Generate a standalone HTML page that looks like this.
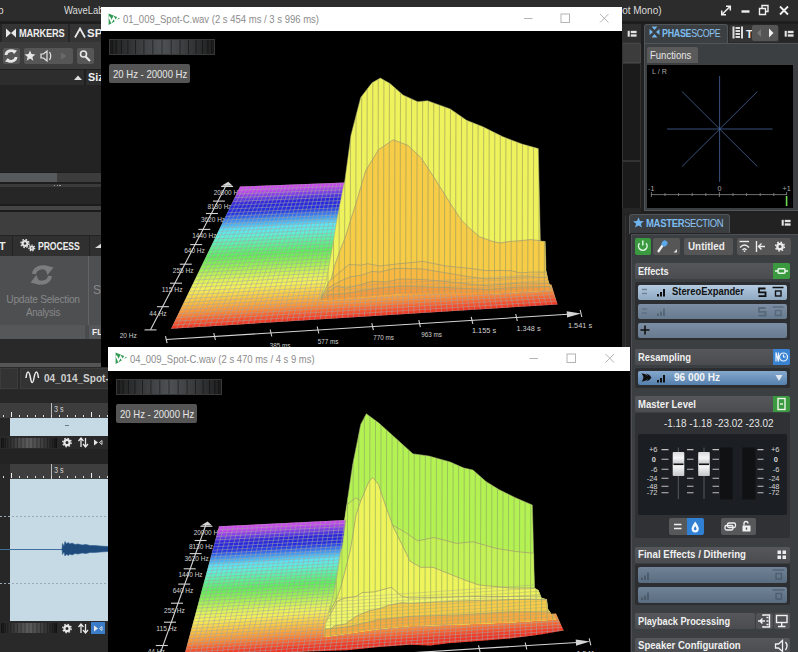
<!DOCTYPE html>
<html><head><meta charset="utf-8"><title>WaveLab</title>
<style>
html,body{margin:0;padding:0;background:#2b2b2b;}
#root{position:relative;width:798px;height:652px;overflow:hidden;background:#2a2a2a;font-family:"Liberation Sans",sans-serif;font-size:12px;color:#e4e4e4;}
#root div,#root span,#root svg{position:absolute;box-sizing:border-box;}
.t{white-space:nowrap;line-height:1;}
.b{font-weight:bold;}
.btn{background:#565656;border-radius:2px;}
.hdr{background:linear-gradient(#55575a,#4a4c4f);border-radius:2px;height:16px;left:635px;width:155px;}
.hdr .t{left:3.400px;top:2.600px;font-weight:bold;font-size:11px;color:#f0f0f0;}
.slot{left:638px;width:149px;height:15px;border-radius:2px;}
.win{overflow:hidden;background:#000;}
.wtitle{left:0;top:0;right:0;height:24px;background:#fff;}
.wtitle .t{color:#8c8c8c;font-size:10.500px;top:7px;}
.rng{height:19px;width:81px;background:#555;border-radius:2px;}
.rng .t{left:3.600px;top:4.500px;font-size:10.500px;color:#e6e6e6;}

#tx1{transform:scaleX(0.9465);transform-origin:0 0;}
#tx2{transform:scaleX(0.9961);transform-origin:0 0;}
#tx3{transform:scaleX(0.8035);transform-origin:0 0;}
#tx4{transform:scaleX(0.8002);transform-origin:0 0;}
#tx5{transform:scaleX(0.9479) translateX(-50%);transform-origin:0 0;}
#tx6{transform:scaleX(0.8992) translateX(-50%);transform-origin:0 0;}
#tx7{transform:scaleX(0.9300);transform-origin:0 0;}
#tx8{transform:scaleX(0.8224);transform-origin:0 0;}
#tx9{transform:scaleX(0.9071);transform-origin:0 0;}
#tx10{transform:scaleX(0.8786);transform-origin:0 0;}
#tx11{transform:scaleX(0.9132);transform-origin:0 0;}
#tx12{transform:scaleX(0.8341);transform-origin:0 0;}
#tx13{transform:scaleX(0.8533);transform-origin:0 0;}
#tx14{transform:scaleX(0.8499);transform-origin:0 0;}
#tx15{transform:scaleX(0.9346);transform-origin:0 0;}
#tx16{transform:scaleX(0.8701);transform-origin:0 0;}
#tx17{transform:scaleX(0.9434);transform-origin:0 0;}
#tx18{transform:scaleX(0.8791);transform-origin:0 0;}
#tx19{transform:scaleX(0.8359);transform-origin:0 0;}
#tx20{transform:scaleX(0.8706);transform-origin:0 0;}
#tx21{transform:scaleX(0.9052);transform-origin:0 0;}
#tx22{transform:scaleX(0.9092);transform-origin:0 0;}
#tx23{transform:scaleX(0.9012);transform-origin:0 0;}
#tx24{transform:scaleX(0.9092);transform-origin:0 0;}
</style></head>
<body>
<div id="root">
<!-- title bar -->
<div style="left:0;top:0;width:798px;height:21px;background:#2c2c2c;"></div>
<div class="t" style="left:-2px;top:5.700px;font-size:10px;color:#dcdcdc;">p</div>
<div style="left:0;top:0;width:100.500px;height:21px;overflow:hidden;"><div id="tx1" class="t" style="left:64px;top:5.700px;font-size:10px;color:#dcdcdc;">WaveLab Pro</div></div>
<div style="left:622px;top:0;width:100px;height:21px;overflow:hidden;"><div id="tx2" class="t" style="left:-12.500px;top:5.700px;font-size:10px;color:#dcdcdc;">Spot Mono)</div></div>
<svg style="left:715px;top:0" width="83" height="21" viewBox="715 0 83 21" fill="none" stroke="#f0f0f0" stroke-width="1.6">
 <path d="M722 14.5 L730 6.5 M726 6.2 h4.3 v4.3 M721.7 10.5 v4.3 h4.3" stroke-width="1.5"/>
 <path d="M741.5 11.5 h8" stroke-width="2.4"/>
 <path d="M759.5 8.5 h6 v6 h-6 z M762 8 v-2.5 h6 v6 h-2.5" stroke-width="1.4"/>
 <path d="M780 6.5 l8 8 M788 6.5 l-8 8" stroke-width="1.8"/>
</svg>
<div style="left:0;top:21px;width:798px;height:3px;background:#1e1e1e;"></div>

<!-- LEFT TOP PANEL -->
<div style="left:0;top:24px;width:641px;height:18px;background:#262626;"></div>
<div style="left:2px;top:24px;width:66px;height:18px;background:#343434;"></div>
<div style="left:70px;top:24px;width:60px;height:18px;background:#343434;"></div>
<svg style="left:5px;top:27px" width="12" height="12" viewBox="0 0 12 12"><path d="M1 1.5 L6 6 L1 10.5 Z M11 1.5 L6 6 L11 10.5 Z" fill="#e8e8e8"/></svg>
<div id="tx3" class="t b" style="left:19px;top:28px;font-size:11.5px;color:#ececec;letter-spacing:-0.2px;">MARKERS</div>
<svg style="left:74px;top:27px" width="12" height="12" viewBox="0 0 12 12"><path d="M1 10.5 L6 1.5 L11 10.5" fill="none" stroke="#e8e8e8" stroke-width="1.8"/></svg>
<div class="t b" style="left:87px;top:28px;font-size:11.5px;color:#ececec;">SPE</div>
<!-- toolbar -->
<div style="left:0;top:42px;width:641px;height:27px;background:#3c3c3c;"></div>
<div class="btn" style="left:2.5px;top:48px;width:17px;height:16px;"></div>
<div class="btn" style="left:23.5px;top:48px;width:49px;height:16px;"></div>
<div class="btn" style="left:77px;top:48px;width:17px;height:16px;"></div>
<svg style="left:0;top:42px" width="101" height="27" viewBox="0 42 101 27">
 <g fill="none" stroke="#e6e6e6" stroke-width="2.800"><path d="M6 55 a5 4.5 0 0 1 9 -2.5"/><path d="M16 57 a5 4.5 0 0 1 -9 2.5"/></g>
 <path d="M12.5 49.5 l4.5 1 l-3 3.5z M9.500 62.500 l-4.500 -1 l3 -3.500z" fill="#e6e6e6"/>
 <path d="M30 50.500 l1.500 3.600 3.900 0.300 -3 2.500 1 3.800 -3.400 -2.100 -3.400 2.100 1 -3.800 -3 -2.500 3.900 -0.300z" fill="#e6e6e6"/>
 <path d="M41 54 h2.500 l3.500 -3 v10 l-3.500 -3 h-2.500z" fill="none" stroke="#e6e6e6" stroke-width="1.200"/>
 <path d="M49.500 52 q2.500 4 0 8" fill="none" stroke="#e6e6e6" stroke-width="1.200"/>
 <path d="M61 52.500 l5.500 3.500 -5.500 3.500z" fill="#6a6a6a"/>
 <circle cx="83.500" cy="54" r="3" fill="none" stroke="#e6e6e6" stroke-width="1.600"/>
 <path d="M85.500 56.500 l4.500 4.500" stroke="#e6e6e6" stroke-width="2.200"/>
</svg>
<!-- list header -->
<div style="left:0;top:69px;width:641px;height:16px;background:#1f1f1f;"></div>
<div style="left:0;top:70px;width:84px;height:14.500px;background:#2d2d2d;"></div>
<div style="left:86px;top:70px;width:80px;height:14.500px;background:#2d2d2d;"></div>
<svg style="left:73px;top:74px" width="10" height="7" viewBox="0 0 10 7"><path d="M1 6 L5 1.500 L9 6z" fill="#e0e0e0"/></svg>
<div class="t b" style="left:88px;top:72px;font-size:10.800px;color:#f0f0f0;">Size</div>
<div style="left:0;top:85px;width:641px;height:87px;background:#232323;"></div>
<!-- scrollbar -->
<div style="left:0;top:172px;width:641px;height:10px;background:#1e1e1e;"></div>
<div style="left:0;top:173px;width:641px;height:8.500px;background:#3c3c3c;"></div>
<div style="left:0;top:173px;width:56.500px;height:8.500px;background:#565a5d;"></div>
<div style="left:0;top:181.500px;width:641px;height:2.500px;background:#1e1e1e;"></div>
<div style="left:0;top:184px;width:641px;height:3px;background:#3a3a3a;"></div>
<div style="left:54px;top:184.500px;width:7px;height:1px;background:repeating-linear-gradient(90deg,#999 0,#999 1.500px,transparent 1.500px,transparent 2.500px);"></div>
<div style="left:0;top:187px;width:641px;height:17px;background:#262626;"></div>
<div style="left:0;top:204px;width:641px;height:1.500px;background:#1c1c1c;"></div>
<div style="left:0;top:205.500px;width:641px;height:4px;background:#444;"></div>
<div style="left:0;top:209.500px;width:641px;height:2.500px;background:#1c1c1c;"></div>
<div style="left:0;top:212px;width:628px;height:22.500px;background:#3e3e3e;"></div>
<!-- process tabs -->
<div style="left:0;top:234.500px;width:628px;height:21px;background:#232323;"></div>
<div style="left:0;top:235.500px;width:11.500px;height:20px;background:#303030;"></div>
<div style="left:13px;top:235.500px;width:75.500px;height:20px;background:#303030;"></div>
<div style="left:90px;top:235.500px;width:60px;height:20px;background:#303030;"></div>
<div class="t b" style="left:-1px;top:240.500px;font-size:10.800px;color:#ececec;">T</div>
<svg style="left:20px;top:238px" width="16" height="15" viewBox="0 0 16 15"><g fill="none" stroke="#e0e0e0"><circle cx="5" cy="5.500" r="2.400" stroke-width="2.200"/><circle cx="5" cy="5.500" r="4" stroke-width="1.400" stroke-dasharray="1.600 1.540"/><circle cx="11.800" cy="10" r="1.600" stroke-width="1.800"/><circle cx="11.800" cy="10" r="2.900" stroke-width="1.200" stroke-dasharray="1.300 1.300"/></g></svg>
<div id="tx4" class="t b" style="left:38px;top:240.500px;font-size:10.800px;color:#ececec;letter-spacing:-0.1px;">PROCESS</div>
<svg style="left:95px;top:242px" width="8" height="10" viewBox="0 0 8 10"><path d="M0 6 L7 1 v5z" fill="#ddd"/></svg>
<!-- process panel -->
<div style="left:0;top:255.500px;width:628px;height:69px;background:#4e4f51;"></div>
<div style="left:88px;top:255.500px;width:1px;height:83px;background:#626364;"></div>
<svg style="left:30px;top:264px" width="24" height="22" viewBox="0 0 24 22"><g fill="none" stroke="#7c7d7f" stroke-width="4"><path d="M4 10 a8 7.500 0 0 1 14 -4"/><path d="M20 12 a8 7.500 0 0 1 -14 4"/></g><path d="M14 1 l9.500 2.500 -6 7.500z M10 21 l-9.500 -2.500 6 -7.500z" fill="#7c7d7f"/></svg>
<div id="tx5" class="t c" style="left:42.800px;top:293.500px;font-size:10.800px;color:#87888a;letter-spacing:-0.300px;">Update Selection</div>
<div id="tx6" class="t c" style="left:42.800px;top:307.200px;font-size:10.800px;color:#87888a;letter-spacing:-0.300px;">Analysis</div>
<div class="t" style="left:93px;top:284px;font-size:12px;color:#87888a;">Se</div>
<div style="left:0;top:324.500px;width:628px;height:14px;background:#565759;"></div>
<div style="left:85px;top:324.500px;width:4px;height:14px;background:#4a4b4d;"></div>
<div class="t b" style="left:92px;top:327.500px;font-size:8.500px;color:#f0f0f0;">FLAT</div>
<div style="left:0;top:338.500px;width:628px;height:24.500px;background:#292929;"></div>
<div style="left:0;top:363px;width:101px;height:3.500px;background:#555;"></div>
<!-- file tabs -->
<div style="left:0;top:366.500px;width:628px;height:23px;background:#2a2a2a;"></div>
<div style="left:0;top:367.500px;width:18px;height:21px;background:#333;border:1px solid #3c3c3c;"></div>
<div style="left:20px;top:367.500px;width:160px;height:21px;background:#333;border:1px solid #3c3c3c;"></div>
<svg style="left:25px;top:371px" width="16" height="13" viewBox="0 0 16 13"><path d="M1 7 c1 -8 3 -8 4.500 0 c1 6 2.500 6 3.500 0 c1.500 -8 3.500 -8 4.500 0" fill="none" stroke="#ececec" stroke-width="1.500"/></svg>
<div id="tx7" class="t b" style="left:44px;top:372.500px;font-size:10.800px;color:#cfcfcf;">04_014_Spot-C</div>
<div style="left:0;top:389.500px;width:628px;height:13px;background:#272727;"></div>
<!-- ruler 1 -->
<div style="left:0;top:402.500px;width:628px;height:15px;background:#3d3d3d;"></div>
<div class="t" style="left:54px;top:404.500px;font-size:8.500px;color:#d0d0d0;transform:scaleX(0.85);transform-origin:0 0;">3 s</div>
<div style="left:51px;top:402.500px;width:1px;height:15px;background:#bbb;"></div>
<div style="left:3px;top:414.500px;width:105px;height:2px;background:repeating-linear-gradient(90deg,#ddd 0,#ddd 1px,transparent 1px,transparent 8px);"></div>
<div style="left:11px;top:411.500px;width:1px;height:5px;background:#eee;"></div>
<div style="left:90.500px;top:411.500px;width:1px;height:5px;background:#eee;"></div>
<div style="left:0;top:417.500px;width:10px;height:19px;background:#262626;"></div>
<div style="left:10px;top:417.500px;width:618px;height:18.500px;background:#c6dae6;"></div>
<div style="left:65px;top:425px;width:4px;height:1px;background:#6a7a86;"></div>
<!-- track toolbar 1 -->
<div style="left:0;top:436px;width:628px;height:13px;background:#292929;"></div>
<svg style="left:1px;top:437.5px" width="56" height="10" viewBox="0 0 56 10"><defs><linearGradient id="jg1" x1="0" y1="0" x2="1" y2="0"><stop offset="0" stop-color="#1c1c1c"/><stop offset="0.14" stop-color="#2e2e2e"/><stop offset="0.32" stop-color="#484848"/><stop offset="0.5" stop-color="#5e5e5e"/><stop offset="0.68" stop-color="#484848"/><stop offset="0.86" stop-color="#2e2e2e"/><stop offset="1" stop-color="#1c1c1c"/></linearGradient></defs><rect x="0" y="0" width="56" height="10" fill="url(#jg1)"/><path d="M0.3 0 V10 M1.1 0 V10 M2.5 0 V10 M4.4 0 V10 M6.8 0 V10 M9.7 0 V10 M12.9 0 V10 M16.4 0 V10 M20.1 0 V10 M24.0 0 V10 M28.0 0 V10 M32.0 0 V10 M35.9 0 V10 M39.6 0 V10 M43.1 0 V10 M46.3 0 V10 M49.2 0 V10 M51.6 0 V10 M53.5 0 V10 M54.9 0 V10 M55.7 0 V10" stroke="#000" stroke-opacity="0.4" stroke-width="0.8" fill="none"/></svg>
<svg style="left:60px;top:436px" width="48" height="13" viewBox="60 436 48 13">
 <g id="trk"><circle cx="67" cy="442.500" r="2.600" fill="none" stroke="#e8e8e8" stroke-width="2.200"/><circle cx="67" cy="442.500" r="4.200" fill="none" stroke="#e8e8e8" stroke-width="1.400" stroke-dasharray="1.500 1.800"/>
 <path d="M81 447 v-8.500 m-2.500 2.500 l2.500 -3 2.500 3 M85.500 438 v8.500 m-2.500 -2.500 l2.500 3 2.500 -3" fill="none" stroke="#e8e8e8" stroke-width="1.300"/>
 <path d="M94 439.500 l4 3 -4 3z" fill="#e8e8e8"/><path d="M102 440.500 l-2.500 2 2.500 2z" fill="none" stroke="#e8e8e8" stroke-width="0.900"/></g>
</svg>
<div style="left:0;top:449px;width:628px;height:14.500px;background:#232323;"></div>
<!-- ruler 2 -->
<div style="left:0;top:463.500px;width:628px;height:15px;background:#3e3e3e;"></div>
<div style="left:0;top:463.500px;width:9.500px;height:190px;background:#272727;"></div>
<div class="t" style="left:54px;top:465.500px;font-size:8.500px;color:#d0d0d0;transform:scaleX(0.85);transform-origin:0 0;">3 s</div>
<div style="left:51px;top:463.500px;width:1px;height:15px;background:#bbb;"></div>
<div style="left:3px;top:475.500px;width:105px;height:2px;background:repeating-linear-gradient(90deg,#ddd 0,#ddd 1px,transparent 1px,transparent 8px);"></div>
<div style="left:11px;top:472.500px;width:1px;height:5px;background:#eee;"></div>
<div style="left:90.500px;top:472.500px;width:1px;height:5px;background:#eee;"></div>
<!-- waveform -->
<div style="left:10px;top:478.500px;width:618px;height:142.500px;background:#c6dae6;"></div>
<div style="left:0;top:516px;width:108px;height:1px;background:repeating-linear-gradient(90deg,#9aaab6 0,#9aaab6 2px,transparent 2px,transparent 4px);"></div>
<div style="left:0;top:583px;width:108px;height:1px;background:repeating-linear-gradient(90deg,#9aaab6 0,#9aaab6 2px,transparent 2px,transparent 4px);"></div>
<div style="left:0;top:548.500px;width:63px;height:1px;background:#3f6f9f;"></div>
<svg style="left:60px;top:538px" width="50" height="22" viewBox="60 538 50 22"><path d="M62 549 L62.500 543.500 L64 546 L65 541.500 L66.500 544 L68 542.500 L70 544 L72 543 L75 544.500 L78 544 L82 545 L86 544.500 L90 545.500 L95 545.500 L100 546 L108 546.500 L108 551.500 L100 552 L95 552.500 L90 552.500 L86 553.500 L82 553 L78 554 L75 553.500 L72 555 L70 554 L68 555.500 L66.500 554 L65 556 L64 552 L62.500 554.500 Z" fill="#1f4b7c" stroke="#2d5c8e" stroke-width="0.600"/></svg>
<!-- track toolbar 2 -->
<div style="left:0;top:621.500px;width:628px;height:13px;background:#292929;"></div>
<svg style="left:1px;top:623px" width="56" height="10" viewBox="0 0 56 10"><defs><linearGradient id="jg2" x1="0" y1="0" x2="1" y2="0"><stop offset="0" stop-color="#1c1c1c"/><stop offset="0.14" stop-color="#2e2e2e"/><stop offset="0.32" stop-color="#484848"/><stop offset="0.5" stop-color="#5e5e5e"/><stop offset="0.68" stop-color="#484848"/><stop offset="0.86" stop-color="#2e2e2e"/><stop offset="1" stop-color="#1c1c1c"/></linearGradient></defs><rect x="0" y="0" width="56" height="10" fill="url(#jg2)"/><path d="M0.3 0 V10 M1.1 0 V10 M2.5 0 V10 M4.4 0 V10 M6.8 0 V10 M9.7 0 V10 M12.9 0 V10 M16.4 0 V10 M20.1 0 V10 M24.0 0 V10 M28.0 0 V10 M32.0 0 V10 M35.9 0 V10 M39.6 0 V10 M43.1 0 V10 M46.3 0 V10 M49.2 0 V10 M51.6 0 V10 M53.5 0 V10 M54.9 0 V10 M55.7 0 V10" stroke="#000" stroke-opacity="0.4" stroke-width="0.8" fill="none"/></svg>
<div style="left:91px;top:622px;width:13.500px;height:11.500px;background:#3a7cc8;"></div>
<svg style="left:60px;top:621.500px" width="48" height="13" viewBox="60 436 48 13"><use href="#trk"/></svg>
<div style="left:0;top:634.500px;width:628px;height:18px;background:#292929;"></div>

<!-- RIGHT-SIDE OF LEFT PANEL (622-641) -->
<div style="left:622px;top:24px;width:19px;height:18px;background:#2e2e2e;"></div>
<svg style="left:626.500px;top:29.500px" width="10.500" height="7.500" viewBox="0 0 12 9" fill="#e4e4e4"><rect x="0.500" y="1" width="2.500" height="7"/><rect x="4.200" y="1" width="7" height="2.800"/><rect x="4.200" y="5.200" width="7" height="2.800"/></svg>
<div style="left:622px;top:42px;width:19px;height:170px;background:#333;"></div>
<div style="left:622.500px;top:43px;width:18px;height:20px;background:#3c3c3c;border:1px solid #474747;border-left:0;border-radius:0 2px 0 0"></div>
<div style="left:622.500px;top:64px;width:17px;height:96px;background:#1b1b1b;"></div>
<div style="left:622.500px;top:161.500px;width:17px;height:46px;background:#1b1b1b;"></div>
<div style="left:622px;top:208px;width:19px;height:5px;background:#262626;"></div>
<div style="left:641px;top:24px;width:3px;height:189px;background:#202020;"></div>
<div style="left:622px;top:213px;width:8px;height:440px;background:#252525;"></div>
<div style="left:624.500px;top:216px;width:1px;height:440px;background:#333;"></div>

<!-- PHASESCOPE -->
<div style="left:644px;top:24px;width:154px;height:18px;background:#262626;"></div>
<div style="left:644px;top:24px;width:83.500px;height:19px;background:#3c3f42;border:1px solid #50555a;border-bottom:0;border-radius:3px 3px 0 0;"></div>
<div style="left:729px;top:24.500px;width:50px;height:17.500px;background:#333;border-radius:2px 2px 0 0;"></div>
<svg style="left:648.500px;top:26px" width="11" height="12" viewBox="0 0 11 12"><path d="M2.600 0.500 h5.800 l-2.900 3.400z M2.600 11.500 h5.800 l-2.900 -3.400z M0.500 3 v6 l3.500 -3z M10.500 3 v6 l-3.500 -3z" fill="#72b6ee"/></svg>
<div id="tx8" class="t" style="left:662.400px;top:28.400px;font-size:10.800px;color:#7cbcf0;letter-spacing:-0.350px;"><b style="font-weight:bold">PHASE</b><span style="position:static;color:#8cc4f2;letter-spacing:-0.500px">SCOPE</span></div>
<svg style="left:732px;top:26px" width="12" height="13" viewBox="0 0 12 13" fill="#dcdcdc"><rect x="0.500" y="0.500" width="2" height="12"/><rect x="9" y="0.500" width="2" height="12"/><rect x="3.500" y="1" width="4.500" height="2"/><rect x="3.500" y="4" width="4.500" height="2"/><rect x="3.500" y="7" width="4.500" height="2"/><rect x="3.500" y="10" width="4.500" height="2"/></svg>
<div class="t b" style="left:746px;top:28.500px;font-size:10.800px;color:#ececec;">T</div>
<div style="left:752px;top:25px;width:26px;height:16px;background:#555;border-radius:2px;"></div>
<svg style="left:752px;top:25px" width="26" height="16" viewBox="0 0 26 16"><path d="M9 4 l-4 4 4 4z" fill="#777"/><path d="M17 3.500 l4.500 4.500 -4.500 4.500z" fill="#f0f0f0"/></svg>
<svg style="left:783.500px;top:29.500px" width="10.500" height="7.500" viewBox="0 0 12 9" fill="#e4e4e4"><rect x="0.500" y="1" width="2.500" height="7"/><rect x="4.200" y="1" width="7" height="2.800"/><rect x="4.200" y="5.200" width="7" height="2.800"/></svg>
<div style="left:644px;top:42.500px;width:154px;height:168px;background:#3c3f42;border:1px solid #50555a;border-right:0;"></div>
<div style="left:646.500px;top:47px;width:51.500px;height:16px;background:#5a5a5a;border-radius:2px 2px 0 0;"></div>
<div id="tx9" class="t" style="left:649.500px;top:49.900px;font-size:10.500px;color:#e6e6e6;">Functions</div>
<div style="left:646.500px;top:64.500px;width:146px;height:143px;background:#000;"></div>
<svg style="left:646px;top:64px" width="147" height="144" viewBox="646 64 147 144">
 <g stroke="#46669a" stroke-width="0.800"><line x1="719.600" y1="76" x2="719.600" y2="182"/><line x1="667" y1="129" x2="772.600" y2="129"/><line x1="682" y1="91.500" x2="757.400" y2="166.500"/><line x1="757.400" y1="91.500" x2="682" y2="166.500"/></g>
 <g stroke="#8c8c8c" stroke-width="0.800"><line x1="651" y1="194.600" x2="787" y2="194.600"/>
 <path d="M651.400 192 v5 M665 193 v3 M678.600 193 v3 M692.200 193 v3 M705.800 193 v3 M719.400 192 v5 M733 193 v3 M746.600 193 v3 M760.200 193 v3 M773.800 193 v3 M786.600 192 v3"/></g>
 <rect x="785.800" y="196" width="1.600" height="10" fill="#6fdc50"/>
 <g font-family="Liberation Sans, sans-serif" font-size="7.200" fill="#a8a8a8"><text x="652" y="73.500">L / R</text><text x="648" y="191">-1</text><text x="717.500" y="191">0</text><text x="782.500" y="191">+1</text></g>
</svg>
<div style="left:644px;top:210.500px;width:154px;height:3px;background:#202020;"></div>

<!-- MASTER SECTION -->
<div style="left:628px;top:213px;width:170px;height:20px;background:#222;"></div>
<div style="left:628.500px;top:213.500px;width:101px;height:20px;background:#3b3e41;border:1px solid #50555a;border-bottom:0;border-radius:3px 3px 0 0;"></div>
<svg style="left:633px;top:217px" width="11" height="11" viewBox="0 0 11 11"><path d="M5.500 0.300 l1.500 3.600 3.900 0.300 -3 2.500 1 3.800 -3.400 -2.100 -3.400 2.100 1 -3.800 -3 -2.500 3.900 -0.300z" fill="#6eb4ee"/></svg>
<div id="tx10" class="t" style="left:646.400px;top:217.900px;font-size:10.800px;color:#7cbcf0;letter-spacing:-0.350px;"><b style="font-weight:bold">MASTER</b><span style="position:static;color:#8cc4f2;letter-spacing:-0.550px">SECTION</span></div>
<svg style="left:781px;top:218.500px" width="10.500" height="7.500" viewBox="0 0 12 9" fill="#e4e4e4"><rect x="0.500" y="1" width="2.500" height="7"/><rect x="4.200" y="1" width="7" height="2.800"/><rect x="4.200" y="5.200" width="7" height="2.800"/></svg>
<div style="left:630px;top:232.500px;width:168px;height:420px;background:#222;"></div>
<div style="left:631px;top:234px;width:167px;height:420px;background:#3c3f42;border-left:1px solid #4c5054;border-top:1px solid #4c5054;"></div>
<!-- toolbar -->
<div style="left:634.500px;top:238px;width:16.500px;height:16.500px;background:#3b9a40;border-radius:2px;"></div>
<div class="btn" style="left:653px;top:238px;width:26.500px;height:16.500px;"></div>
<div class="btn" style="left:683.500px;top:238px;width:49px;height:16.500px;"></div>
<div class="btn" style="left:737px;top:238px;width:53.500px;height:16.500px;"></div>
<div id="tx11" class="t b" style="left:687.500px;top:241.400px;font-size:10.800px;color:#ececec;">Untitled</div>
<svg style="left:634px;top:238px" width="157" height="17" viewBox="634 238 157 17">
 <path d="M639.500 243.200 a4.300 4.300 0 1 0 6.600 0" fill="none" stroke="#dff5e0" stroke-width="1.500"/><path d="M642.800 240.500 v5" stroke="#dff5e0" stroke-width="1.500"/>
 <ellipse cx="664.500" cy="243.500" rx="2.800" ry="3.200" transform="rotate(35 664.500 243.500)" fill="#5aa8ea"/><path d="M662.500 245.500 l-4.500 6.500" stroke="#f0f0f0" stroke-width="2.200"/>
 <path d="M677 249 v3.500 h-3.500z" fill="#e0e0e0"/>
 <g fill="none" stroke="#ececec" stroke-width="1.400"><path d="M739.500 241.500 h9.500"/><path d="M740 247.500 q4.500 -5 9 0"/><path d="M742.500 250 q2 -2.500 4 0 M744.500 250.500 v1.500"/>
 <path d="M756.500 241 v11 M765 246.500 h-6.500 m3 -3 l-3 3 3 3"/></g>
 <circle cx="780" cy="246.500" r="2.700" fill="none" stroke="#ececec" stroke-width="2.300"/><circle cx="780" cy="246.500" r="4.400" fill="none" stroke="#ececec" stroke-width="1.500" stroke-dasharray="1.600 1.860"/>
</svg>
<!-- effects -->
<div class="hdr" style="top:263px;"><div id="tx12" class="t">Effects</div></div>
<div style="left:773px;top:263px;width:17px;height:16px;background:#3b9a40;border-radius:0 2px 2px 0;"></div>
<svg style="left:773px;top:263px" width="17" height="16" viewBox="0 0 17 16"><rect x="5" y="5.700" width="7" height="4.600" rx="1" fill="none" stroke="#eaf8ea" stroke-width="1.500"/><path d="M2 8 h3 M12 8 h3" stroke="#eaf8ea" stroke-width="1.500"/></svg>
<div style="left:635px;top:281.500px;width:155px;height:58.500px;background:#2c2e31;border-radius:2px;"></div>
<div class="slot" style="top:284.500px;background:linear-gradient(#b4cbe0,#8fa9c2);"></div>
<div class="slot" style="top:304px;background:linear-gradient(#7b8ea3,#677a8e);"></div>
<div class="slot" style="top:322.500px;background:linear-gradient(#7b8ea3,#677a8e);"></div>
<div id="tx13" class="t b" style="left:672.400px;top:286px;font-size:11px;color:#111;">StereoExpander</div>
<svg style="left:638px;top:284px" width="149" height="54" viewBox="638 284 149 54">
 <path d="M642 289.500 h5 M642 293.500 h5" stroke="#6f8296" stroke-width="1.300"/>
 <path d="M657 296.500 h2 v-2.500 h-2z M660 296.500 h2 v-4.500 h-2z M663 296.500 h2 v-7.500 h-2z" fill="#111"/>
 <path d="M765.500 288.500 h-6.500 v3.800 h6.500 v3.800 h-7" fill="none" stroke="#111" stroke-width="1.800"/>
 <path d="M772.500 287.500 h11" stroke="#111" stroke-width="1.500"/><rect x="775.500" y="291" width="5.500" height="5" fill="none" stroke="#111" stroke-width="1.400"/>
 <g opacity="0.450"><path d="M642 309 h5 M642 313 h5" stroke="#4a5a6a" stroke-width="1.300"/>
 <path d="M657 316 h2 v-2.500 h-2z M660 316 h2 v-4.500 h-2z M663 316 h2 v-7.500 h-2z" fill="#3a4856"/>
 <path d="M765.500 308 h-6.500 v3.800 h6.500 v3.800 h-7" fill="none" stroke="#3a4856" stroke-width="1.800"/>
 <path d="M772.500 307 h11" stroke="#3a4856" stroke-width="1.500"/><rect x="775.500" y="310.500" width="5.500" height="5" fill="none" stroke="#3a4856" stroke-width="1.400"/></g>
 <path d="M640.500 330 h9 M645 325.500 v9" stroke="#111" stroke-width="1.600"/>
</svg>
<!-- resampling -->
<div class="hdr" style="top:349px;"><div id="tx14" class="t">Resampling</div></div>
<div style="left:773px;top:349px;width:17px;height:16px;background:#3a82d2;border-radius:0 2px 2px 0;"></div>
<svg style="left:773px;top:349px" width="17" height="16" viewBox="0 0 17 16" fill="none" stroke="#e8f2fc" stroke-width="1.200"><path d="M3 12.500 v-9 l2.500 9 v-9"/><circle cx="10.500" cy="8" r="4"/><path d="M10.500 5.500 v2.500 h2"/></svg>
<div style="left:635px;top:367.500px;width:155px;height:20px;background:#2c2e31;border-radius:2px;"></div>
<div class="slot" style="top:370.500px;height:14.500px;background:linear-gradient(#86a8cc,#5580ae);"></div>
<div id="tx15" class="t b" style="left:674px;top:371.700px;font-size:10.800px;color:#f4f4f4;">96 000 Hz</div>
<svg style="left:638px;top:370px" width="149" height="16" viewBox="638 370 149 16">
 <path d="M641.500 373.500 q5 0 7.500 4 q-2.500 4 -7.500 4 q3.500 -4 0 -8z" fill="#111"/><path d="M646 373.500 q4 1 5.500 4 q-1.500 3 -5.500 4 q4 -4 0 -8z" fill="#111"/>
 <path d="M657 382.500 h2 v-2.500 h-2z M660 382.500 h2 v-4.500 h-2z M663 382.500 h2 v-7.500 h-2z" fill="#111"/>
 <path d="M775.500 375 h7 l-3.500 6z" fill="#dfe8f2"/>
</svg>
<!-- master level -->
<div class="hdr" style="top:396px;"><div id="tx16" class="t">Master Level</div></div>
<div style="left:773px;top:396px;width:17px;height:16px;background:#3b9a40;border-radius:0 2px 2px 0;"></div>
<svg style="left:773px;top:396px" width="17" height="16" viewBox="0 0 17 16" fill="none" stroke="#eaf8ea" stroke-width="1.400"><rect x="5" y="2.500" width="7" height="11"/><path d="M7 8 h3"/></svg>
<div style="left:635px;top:413px;width:155px;height:125px;background:#2f3134;border-radius:2px;"></div>
<div id="tx17" class="t" style="left:664.400px;top:417.500px;font-size:10.500px;color:#e6e6e6;">-1.18 -1.18 -23.02 -23.02</div>
<div style="left:638px;top:433.500px;width:149px;height:81px;background:#1b1e22;border-radius:2px;"></div>
<svg style="left:638px;top:433px" width="149" height="82" viewBox="638 433 149 82">
 <rect x="720" y="447.500" width="12.600" height="52" fill="#101113"/><rect x="742.300" y="447.500" width="13" height="52" fill="#101113"/>
 <g stroke="#c0c0c0" stroke-width="1.100">
  <path d="M661.500 449.600 h7 M661.500 459.300 h7 M661.500 469.200 h7 M661.500 478.300 h7 M661.500 486.300 h7 M661.500 492.700 h7"/>
  <path d="M687 449.600 h6.500 M687 459.300 h6.500 M687 469.200 h6.500 M687 478.300 h6.500 M687 486.300 h6.500 M687 492.700 h6.500"/>
  <path d="M712.500 449.600 h6.500 M712.500 459.300 h6.500 M712.500 469.200 h6.500 M712.500 478.300 h6.500 M712.500 486.300 h6.500 M712.500 492.700 h6.500"/>
  <path d="M757.500 449.600 h6 M757.500 459.300 h6 M757.500 469.200 h6 M757.500 478.300 h6 M757.500 486.300 h6 M757.500 492.700 h6"/>
 </g>
 <g stroke="#555a60" stroke-width="1"><line x1="678.300" y1="447.500" x2="678.300" y2="499"/><line x1="704" y1="447.500" x2="704" y2="499"/></g>
 <defs><linearGradient id="kn" x1="0" y1="0" x2="0" y2="1"><stop offset="0" stop-color="#d8dadc"/><stop offset="0.250" stop-color="#f4f5f6"/><stop offset="0.480" stop-color="#c8cacc"/><stop offset="0.560" stop-color="#fafafa"/><stop offset="1" stop-color="#c4c7ca"/></linearGradient></defs>
 <rect x="672.700" y="452" width="11.600" height="24" rx="1" fill="url(#kn)"/><rect x="673.500" y="463.500" width="10" height="1.600" fill="#111"/>
 <rect x="698.200" y="452" width="11.600" height="24" rx="1" fill="url(#kn)"/><rect x="699" y="463.500" width="10" height="1.600" fill="#111"/>
 <g font-family="Liberation Sans, sans-serif" font-size="7.500" fill="#d8d8d8" text-anchor="end">
  <text x="657.500" y="452.300">+6</text><text x="656" y="462" font-weight="bold">0</text><text x="657.500" y="471.900">-6</text><text x="657.500" y="481">-24</text><text x="657.500" y="489">-48</text><text x="657.500" y="495.400">-72</text>
  <text x="779.500" y="452.300">+6</text><text x="778" y="462" font-weight="bold">0</text><text x="779.500" y="471.900">-6</text><text x="779.500" y="481">-24</text><text x="779.500" y="489">-48</text><text x="779.500" y="495.400">-72</text>
 </g>
</svg>
<div style="left:669px;top:518px;width:17.500px;height:17px;background:#56585a;border-radius:2px 0 0 2px;"></div>
<div style="left:686.500px;top:518px;width:17.500px;height:17px;background:#3080d4;border-radius:0 2px 2px 0;"></div>
<div style="left:721px;top:518px;width:34.500px;height:17px;background:#56585a;border-radius:2px;"></div>
<svg style="left:669px;top:518px" width="87" height="17" viewBox="669 518 87 17">
 <path d="M674 524.500 h7.500 M674 528.500 h7.500" stroke="#f0f0f0" stroke-width="1.700"/>
 <path d="M695.200 521.500 q3.600 5 3.600 7.300 a3.600 3.600 0 0 1 -7.200 0 q0 -2.300 3.600 -7.300z" fill="#f4f8fc"/><path d="M695.200 526 q1.300 2 1.300 3 a1.300 1.300 0 0 1 -2.600 0 q0 -1 1.300 -3z" fill="#3080d4"/>
 <g fill="none" stroke="#f0f0f0" stroke-width="1.300"><rect x="725" y="525.500" width="8" height="4.500" rx="1.500"/><rect x="727.500" y="523" width="8" height="4.500" rx="1.500"/></g>
 <rect x="742.500" y="525.500" width="8" height="6" fill="#f0f0f0"/><path d="M744 525.500 v-2 a2 2 0 0 1 4 0" fill="none" stroke="#f0f0f0" stroke-width="1.300"/><rect x="745.800" y="527.500" width="1.400" height="2.200" fill="#56585a"/>
</svg>
<!-- final effects -->
<div class="hdr" style="top:546.500px;"><div id="tx18" class="t">Final Effects / Dithering</div></div>
<svg style="left:777px;top:550px" width="10" height="10" viewBox="0 0 10 10" fill="#ececec"><rect x="0.500" y="0.500" width="3.500" height="3.500"/><rect x="5.500" y="0.500" width="3.500" height="3.500"/><rect x="0.500" y="5.500" width="3.500" height="3.500"/><rect x="5.500" y="5.500" width="3.500" height="3.500"/></svg>
<div style="left:635px;top:564px;width:155px;height:41px;background:#2c2e31;border-radius:2px;"></div>
<div class="slot" style="top:567px;height:16px;background:linear-gradient(#6f8296,#5a6c80);"></div>
<div class="slot" style="top:587px;height:15.500px;background:linear-gradient(#6f8296,#5a6c80);"></div>
<svg style="left:638px;top:566px" width="149" height="38" viewBox="638 566 149 38" opacity="0.550">
 <path d="M641 580 h2 v-2.500 h-2z M644 580 h2 v-4.500 h-2z M647 580 h2 v-7.500 h-2z" fill="#3a4856"/>
 <path d="M772.500 570 h12" stroke="#3a4856" stroke-width="1.400"/><rect x="776" y="573.500" width="5.500" height="5.500" fill="none" stroke="#3a4856" stroke-width="1.300"/>
 <path d="M641 600 h2 v-2.500 h-2z M644 600 h2 v-4.500 h-2z M647 600 h2 v-7.500 h-2z" fill="#3a4856"/>
 <path d="M772.500 590 h12" stroke="#3a4856" stroke-width="1.400"/><rect x="776" y="593.500" width="5.500" height="5.500" fill="none" stroke="#3a4856" stroke-width="1.300"/>
</svg>
<!-- playback processing -->
<div class="hdr" style="top:613px;width:120px;"><div id="tx19" class="t">Playback Processing</div></div>
<div style="left:756px;top:613px;width:16.500px;height:16px;background:#505255;border-radius:2px;"></div>
<div style="left:773.500px;top:613px;width:16.500px;height:16px;background:#505255;border-radius:2px;"></div>
<svg style="left:756px;top:613px" width="34" height="16" viewBox="756 613 34 16" fill="none" stroke="#f0f0f0" stroke-width="1.400">
 <path d="M763 616 v-1 h6.500 v12 h-6.500 v-1"/><path d="M758 621 h7 m-2.500 -2.500 l-2.500 2.500 2.500 2.500 M766.500 617.500 h2 M766.500 621 h2 M766.500 624.500 h2"/>
 <rect x="776.500" y="615.500" width="10.500" height="7"/><path d="M781.700 622.500 v3.500 M778 626.500 h7.500"/>
</svg>
<div class="hdr" style="top:637.500px;"><div id="tx20" class="t" style="top:2.300px">Speaker Configuration</div></div>
<svg style="left:774px;top:639px" width="16" height="13" viewBox="0 0 16 13" fill="none" stroke="#f0f0f0" stroke-width="1.300"><path d="M1.500 5 h3 l4 -3.500 v11 l-4 -3.500 h-3z"/><path d="M11.500 3 q3 3.800 0 8"/></svg>

<!-- WINDOW 1 -->
<div class="win" style="left:100.500px;top:7px;width:521.500px;height:359.500px;">
 <div class="wtitle"><div id="tx21" class="t" style="left:22px;">01_009_Spot-C.wav (2 s 454 ms / 3 s 996 ms)</div>
  <svg style="left:7px;top:5.500px" width="13" height="13" viewBox="0 0 13 13"><path d="M0.600 0.500 L12 5.200 L0.600 12 Z" fill="#2f9a52"/><path d="M1.200 3.600 L3.400 8.600 L5.600 4.600 L7.600 8.200 L11 2.600" fill="none" stroke="#fff" stroke-width="1.700"/></svg>
  <svg style="left:416px;top:0" width="100" height="24" viewBox="415 0 100 24" fill="none" stroke="#b4b4b4" stroke-width="1"><path d="M422 11.500 h8.500"/><rect x="459" y="7" width="8.500" height="8.500"/><path d="M498 7 l8.500 8.500 M506.500 7 l-8.500 8.500"/></svg>
 </div>
 <svg style="left:8.5px;top:32px" width="106" height="16" viewBox="0 0 106 16"><defs><linearGradient id="jg3" x1="0" y1="0" x2="1" y2="0"><stop offset="0" stop-color="#1e1e1e"/><stop offset="0.14" stop-color="#2c2d2e"/><stop offset="0.32" stop-color="#3e4042"/><stop offset="0.5" stop-color="#4e5154"/><stop offset="0.68" stop-color="#3e4042"/><stop offset="0.86" stop-color="#2c2d2e"/><stop offset="1" stop-color="#1e1e1e"/></linearGradient></defs><rect x="0" y="0" width="106" height="16" fill="url(#jg3)"/><path d="M0.8 0 V16 M3.2 0 V16 M7.1 0 V16 M12.4 0 V16 M18.9 0 V16 M26.5 0 V16 M34.9 0 V16 M43.8 0 V16 M53.0 0 V16 M62.2 0 V16 M71.1 0 V16 M79.5 0 V16 M87.1 0 V16 M93.6 0 V16 M98.9 0 V16 M102.8 0 V16 M105.2 0 V16" stroke="#000" stroke-opacity="0.45" stroke-width="1" fill="none"/><rect x="0.5" y="0.5" width="105" height="15" fill="none" stroke="#383838"/></svg>
 <div class="rng" style="left:8.500px;top:57px;"><div id="tx22" class="t">20 Hz - 20000 Hz</div></div>
 <svg style="left:-100.500px;top:-7px" width="798" height="652" viewBox="0 0 798 652">
<defs><linearGradient id="rb1" gradientUnits="userSpaceOnUse" x1="240.0" y1="186.5" x2="248.6" y2="323.8">
<stop offset="0" stop-color="#d850f0"/>
<stop offset="0.04" stop-color="#c048ec"/>
<stop offset="0.09" stop-color="#6a3ce4"/>
<stop offset="0.13" stop-color="#2a24dc"/>
<stop offset="0.19" stop-color="#2430e0"/>
<stop offset="0.25" stop-color="#4090f0"/>
<stop offset="0.31" stop-color="#5ee4f4"/>
<stop offset="0.36" stop-color="#5ef0d8"/>
<stop offset="0.43" stop-color="#5ef098"/>
<stop offset="0.5" stop-color="#5eee58"/>
<stop offset="0.56" stop-color="#88f054"/>
<stop offset="0.62" stop-color="#b8f254"/>
<stop offset="0.68" stop-color="#e4f458"/>
<stop offset="0.73" stop-color="#f6f058"/>
<stop offset="0.79" stop-color="#f8d048"/>
<stop offset="0.84" stop-color="#f8b440"/>
<stop offset="0.9" stop-color="#f88c38"/>
<stop offset="0.95" stop-color="#f65c30"/>
<stop offset="1" stop-color="#f03424"/>
</linearGradient>
<clipPath id="fc1"><polygon points="240.0,186.5 345.0,182.5 345.0,295.5 330.7,294.0 361.3,291.2 400.0,288.0 446.0,287.5 486.0,288.0 520.0,286.0 551.4,284.5 557.6,304.5 171.0,328.7"/></clipPath>
<clipPath id="wc1"><polygon points="344.4,183.8 351.0,135.0 360.7,97.5 372.0,82.8 380.3,78.0 390.0,83.5 403.0,95.0 417.7,101.7 427.5,100.7 450.3,108.9 466.6,120.3 483.0,126.8 496.0,133.3 502.5,136.6 522.0,144.0 538.3,148.6 540.4,241.0 545.2,241.5 546.0,270.6 548.3,281.3 551.4,290.5 551.4,290.5 520.0,292.0 486.0,294.0 446.0,293.5 400.0,294.0 361.3,297.2 330.7,300.0 320.0,300.5 320.5,298.0 323.0,290.6 326.0,281.4 329.0,266.0 333.0,243.0 336.8,220.0 344.0,183.0"/></clipPath>
</defs>
<g stroke="#d4d4d4" stroke-width="1.1" fill="none">
<line x1="150.5" y1="329.7" x2="227.1" y2="183.5"/>
<line x1="144.5" y1="329.9" x2="156.5" y2="329.9"/>
<line x1="156.9" y1="306.7" x2="168.9" y2="306.7"/>
<line x1="170" y1="283.2" x2="182" y2="283.2"/>
<line x1="179.8" y1="264.2" x2="191.8" y2="264.2"/>
<line x1="190.2" y1="244.6" x2="202.2" y2="244.6"/>
<line x1="198.3" y1="229.4" x2="210.3" y2="229.4"/>
<line x1="205.9" y1="213.5" x2="217.9" y2="213.5"/>
<line x1="212.9" y1="201.1" x2="224.9" y2="201.1"/>
<line x1="221.1" y1="186.5" x2="233.1" y2="186.5"/>
<line x1="166" y1="339.5" x2="568" y2="314.3"/>
<line x1="165.5" y1="336.1" x2="167.10000000000002" y2="343.1"/>
<line x1="213.79999999999998" y1="333.0" x2="215.4" y2="340.0"/>
<line x1="270.2" y1="329.5" x2="271.8" y2="336.5"/>
<line x1="317.2" y1="326.5" x2="318.8" y2="333.5"/>
<line x1="371.8" y1="323.1" x2="373.40000000000003" y2="330.1"/>
<line x1="418.8" y1="320.1" x2="420.40000000000003" y2="327.1"/>
<line x1="471.2" y1="316.8" x2="472.8" y2="323.8"/>
<line x1="515.7" y1="314.0" x2="517.3" y2="321.0"/>
<line x1="580.2" y1="310.0" x2="581.8" y2="317.0"/>
</g>
<polygon points="221.6,185.7 232.6,185.7 228.29999999999998,181.7" fill="#d4d4d4"/>
<polygon points="581,313.40000000000003 566.7,311.2 567.1,317.6" fill="#d4d4d4"/>
<g font-family="Liberation Sans, sans-serif" font-size="7.6" fill="#d0d0d0" text-anchor="middle">
<text x="128.3" y="338.4" textLength="17.2" lengthAdjust="spacingAndGlyphs">20 Hz</text>
<text x="157.9" y="316.0" textLength="17.2" lengthAdjust="spacingAndGlyphs">44 Hz</text>
<text x="172.2" y="291.59999999999997" textLength="20.7" lengthAdjust="spacingAndGlyphs">115 Hz</text>
<text x="183.1" y="272.8" textLength="20.7" lengthAdjust="spacingAndGlyphs">255 Hz</text>
<text x="194.5" y="253.39999999999998" textLength="20.7" lengthAdjust="spacingAndGlyphs">640 Hz</text>
<text x="204.3" y="237.5" textLength="24.2" lengthAdjust="spacingAndGlyphs">1440 Hz</text>
<text x="213" y="221.79999999999998" textLength="24.2" lengthAdjust="spacingAndGlyphs">3620 Hz</text>
<text x="219.5" y="209.2" textLength="24.2" lengthAdjust="spacingAndGlyphs">8130 Hz</text>
<text x="227.5" y="195.0" textLength="27.6" lengthAdjust="spacingAndGlyphs">20000 Hz</text>
<text x="222.6" y="352.0" textLength="20.7" lengthAdjust="spacingAndGlyphs">192 ms</text>
<text x="280" y="347.5" textLength="20.7" lengthAdjust="spacingAndGlyphs">385 ms</text>
<text x="328" y="344" textLength="20.7" lengthAdjust="spacingAndGlyphs">577 ms</text>
<text x="383.6" y="340.1" textLength="20.7" lengthAdjust="spacingAndGlyphs">770 ms</text>
<text x="431.6" y="336.6" textLength="20.7" lengthAdjust="spacingAndGlyphs">963 ms</text>
<text x="484" y="333.3" textLength="24.2" lengthAdjust="spacingAndGlyphs">1.155 s</text>
<text x="528.5" y="330.5" textLength="24.2" lengthAdjust="spacingAndGlyphs">1.348 s</text>
<text x="580" y="327.5" textLength="24.2" lengthAdjust="spacingAndGlyphs">1.541 s</text>
</g>
<polygon points="240.0,186.5 345.0,182.5 345.0,295.5 330.7,294.0 361.3,291.2 400.0,288.0 446.0,287.5 486.0,288.0 520.0,286.0 551.4,284.5 557.6,304.5 171.0,328.7" fill="url(#rb1)"/>
<g clip-path="url(#fc1)" stroke="#a4a4a4" stroke-opacity="0.8" stroke-width="0.65" fill="none">
<line x1="240.0" y1="186.5" x2="515.2" y2="176.0"/>
<line x1="238.2" y1="190.2" x2="516.3" y2="179.4"/>
<line x1="236.4" y1="194.0" x2="517.5" y2="182.8"/>
<line x1="234.6" y1="197.7" x2="518.6" y2="186.2"/>
<line x1="232.7" y1="201.5" x2="519.7" y2="189.5"/>
<line x1="230.9" y1="205.2" x2="520.8" y2="192.9"/>
<line x1="229.1" y1="209.0" x2="521.9" y2="196.3"/>
<line x1="227.3" y1="212.7" x2="523.0" y2="199.7"/>
<line x1="225.5" y1="216.4" x2="524.1" y2="203.1"/>
<line x1="223.7" y1="220.2" x2="525.3" y2="206.4"/>
<line x1="221.8" y1="223.9" x2="526.4" y2="209.8"/>
<line x1="220.0" y1="227.7" x2="527.5" y2="213.2"/>
<line x1="218.2" y1="231.4" x2="528.6" y2="216.6"/>
<line x1="216.4" y1="235.1" x2="529.7" y2="220.0"/>
<line x1="214.6" y1="238.9" x2="530.8" y2="223.4"/>
<line x1="212.8" y1="242.6" x2="531.9" y2="226.7"/>
<line x1="210.9" y1="246.4" x2="533.1" y2="230.1"/>
<line x1="209.1" y1="250.1" x2="534.2" y2="233.5"/>
<line x1="207.3" y1="253.9" x2="535.3" y2="236.9"/>
<line x1="205.5" y1="257.6" x2="536.4" y2="240.3"/>
<line x1="203.7" y1="261.3" x2="537.5" y2="243.6"/>
<line x1="201.9" y1="265.1" x2="538.6" y2="247.0"/>
<line x1="200.1" y1="268.8" x2="539.8" y2="250.4"/>
<line x1="198.2" y1="272.6" x2="540.9" y2="253.8"/>
<line x1="196.4" y1="276.3" x2="542.0" y2="257.2"/>
<line x1="194.6" y1="280.1" x2="543.1" y2="260.5"/>
<line x1="192.8" y1="283.8" x2="544.2" y2="263.9"/>
<line x1="191.0" y1="287.5" x2="545.3" y2="267.3"/>
<line x1="189.2" y1="291.3" x2="546.4" y2="270.7"/>
<line x1="187.3" y1="295.0" x2="547.6" y2="274.1"/>
<line x1="185.5" y1="298.8" x2="548.7" y2="277.5"/>
<line x1="183.7" y1="302.5" x2="549.8" y2="280.8"/>
<line x1="181.9" y1="306.2" x2="550.9" y2="284.2"/>
<line x1="180.1" y1="310.0" x2="552.0" y2="287.6"/>
<line x1="178.3" y1="313.7" x2="553.1" y2="291.0"/>
<line x1="176.4" y1="317.5" x2="554.3" y2="294.4"/>
<line x1="174.6" y1="321.2" x2="555.4" y2="297.7"/>
<line x1="172.8" y1="325.0" x2="556.5" y2="301.1"/>
<line x1="171.0" y1="328.7" x2="557.6" y2="304.5"/>
<line x1="169.2" y1="332.4" x2="558.7" y2="307.9"/>
<line x1="167.4" y1="336.2" x2="559.8" y2="311.3"/>
<line x1="165.6" y1="339.9" x2="560.9" y2="314.6"/>
<line x1="240.0" y1="186.5" x2="164.1" y2="342.9"/>
<line x1="243.9" y1="186.4" x2="169.8" y2="342.6"/>
<line x1="247.7" y1="186.2" x2="175.5" y2="342.2"/>
<line x1="251.6" y1="186.1" x2="181.2" y2="341.8"/>
<line x1="255.4" y1="185.9" x2="186.9" y2="341.5"/>
<line x1="259.3" y1="185.8" x2="192.5" y2="341.1"/>
<line x1="263.2" y1="185.6" x2="198.2" y2="340.7"/>
<line x1="267.0" y1="185.5" x2="203.9" y2="340.4"/>
<line x1="270.9" y1="185.3" x2="209.6" y2="340.0"/>
<line x1="274.8" y1="185.2" x2="215.3" y2="339.6"/>
<line x1="278.6" y1="185.0" x2="221.0" y2="339.3"/>
<line x1="282.5" y1="184.9" x2="226.7" y2="338.9"/>
<line x1="286.4" y1="184.7" x2="232.4" y2="338.5"/>
<line x1="290.3" y1="184.6" x2="238.0" y2="338.2"/>
<line x1="294.2" y1="184.4" x2="243.7" y2="337.8"/>
<line x1="298.0" y1="184.3" x2="249.4" y2="337.4"/>
<line x1="301.9" y1="184.1" x2="255.1" y2="337.1"/>
<line x1="305.8" y1="184.0" x2="260.8" y2="336.7"/>
<line x1="309.7" y1="183.8" x2="266.5" y2="336.3"/>
<line x1="313.6" y1="183.7" x2="272.2" y2="336.0"/>
<line x1="317.5" y1="183.5" x2="277.9" y2="335.6"/>
<line x1="321.4" y1="183.4" x2="283.5" y2="335.2"/>
<line x1="325.3" y1="183.3" x2="289.2" y2="334.9"/>
<line x1="329.2" y1="183.1" x2="294.9" y2="334.5"/>
<line x1="333.1" y1="183.0" x2="300.6" y2="334.1"/>
<line x1="337.0" y1="182.8" x2="306.3" y2="333.8"/>
<line x1="340.9" y1="182.7" x2="312.0" y2="333.4"/>
<line x1="344.8" y1="182.5" x2="317.6" y2="333.1"/>
<line x1="348.8" y1="182.4" x2="323.3" y2="332.7"/>
<line x1="352.7" y1="182.2" x2="329.0" y2="332.3"/>
<line x1="356.6" y1="182.1" x2="334.7" y2="332.0"/>
<line x1="360.5" y1="181.9" x2="340.4" y2="331.6"/>
<line x1="364.4" y1="181.8" x2="346.1" y2="331.2"/>
<line x1="368.4" y1="181.6" x2="351.7" y2="330.9"/>
<line x1="372.3" y1="181.5" x2="357.4" y2="330.5"/>
<line x1="376.2" y1="181.3" x2="363.1" y2="330.1"/>
<line x1="380.2" y1="181.2" x2="368.8" y2="329.8"/>
<line x1="384.1" y1="181.0" x2="374.5" y2="329.4"/>
<line x1="388.0" y1="180.9" x2="380.2" y2="329.0"/>
<line x1="392.0" y1="180.7" x2="385.8" y2="328.7"/>
<line x1="395.9" y1="180.6" x2="391.5" y2="328.3"/>
<line x1="399.9" y1="180.4" x2="397.2" y2="327.9"/>
<line x1="403.8" y1="180.3" x2="402.9" y2="327.6"/>
<line x1="407.7" y1="180.1" x2="408.6" y2="327.2"/>
<line x1="411.7" y1="180.0" x2="414.2" y2="326.8"/>
<line x1="415.7" y1="179.8" x2="419.9" y2="326.5"/>
<line x1="419.6" y1="179.7" x2="425.6" y2="326.1"/>
<line x1="423.6" y1="179.5" x2="431.3" y2="325.7"/>
<line x1="427.5" y1="179.4" x2="437.0" y2="325.4"/>
<line x1="431.5" y1="179.2" x2="442.6" y2="325.0"/>
<line x1="435.5" y1="179.1" x2="448.3" y2="324.7"/>
<line x1="439.4" y1="178.9" x2="454.0" y2="324.3"/>
<line x1="443.4" y1="178.8" x2="459.7" y2="323.9"/>
<line x1="447.4" y1="178.6" x2="465.3" y2="323.6"/>
<line x1="451.3" y1="178.4" x2="471.0" y2="323.2"/>
<line x1="455.3" y1="178.3" x2="476.7" y2="322.8"/>
<line x1="459.3" y1="178.1" x2="482.4" y2="322.5"/>
<line x1="463.3" y1="178.0" x2="488.1" y2="322.1"/>
<line x1="467.2" y1="177.8" x2="493.7" y2="321.7"/>
<line x1="471.2" y1="177.7" x2="499.4" y2="321.4"/>
<line x1="475.2" y1="177.5" x2="505.1" y2="321.0"/>
<line x1="479.2" y1="177.4" x2="510.8" y2="320.6"/>
<line x1="483.2" y1="177.2" x2="516.4" y2="320.3"/>
<line x1="487.2" y1="177.1" x2="522.1" y2="319.9"/>
<line x1="491.2" y1="176.9" x2="527.8" y2="319.5"/>
<line x1="495.2" y1="176.8" x2="533.5" y2="319.2"/>
<line x1="499.2" y1="176.6" x2="539.1" y2="318.8"/>
<line x1="503.2" y1="176.5" x2="544.8" y2="318.4"/>
<line x1="507.2" y1="176.3" x2="550.5" y2="318.1"/>
<line x1="511.2" y1="176.2" x2="556.2" y2="317.7"/>
<line x1="515.2" y1="176.0" x2="561.8" y2="317.3"/>
</g>
<g clip-path="url(#wc1)">
<polygon points="300.0,60.0 560.0,60.0 580.0,60.0 580.0,700.0 260.0,700.0 260.0,60.0" fill="#eef25c" stroke="#a8a070" stroke-width="0.8"/>
<polygon points="324.0,296.0 328.4,289.0 330.7,281.4 334.5,266.0 339.9,250.7 346.0,235.3 350.6,220.0 356.0,203.4 365.6,170.8 378.6,149.6 393.3,139.8 408.0,145.4 421.0,157.7 434.0,177.3 450.3,203.4 461.3,220.0 469.0,227.7 479.8,236.9 492.0,241.2 500.0,243.0 509.2,241.5 520.0,240.7 530.7,239.6 540.2,240.7 548.0,241.0 568.0,241.0 568.0,700.0 284.0,700.0 284.0,296.0" fill="#f7cc46" stroke="#a8a070" stroke-width="0.8"/>
<polygon points="322.0,296.0 329.0,281.4 340.0,272.0 349.0,264.5 361.3,265.2 367.5,263.7 379.8,266.0 392.0,264.5 400.0,263.7 423.0,261.4 446.0,266.0 469.0,268.3 485.9,270.6 500.0,270.5 510.7,270.6 520.0,272.9 530.7,272.1 548.0,272.1 568.0,272.1 568.0,700.0 282.0,700.0 282.0,296.0" fill="#f8c446" stroke="#a8a070" stroke-width="0.8"/>
<polygon points="320.0,298.0 329.0,287.5 339.9,281.3 350.6,276.7 361.3,275.2 372.0,271.4 379.8,272.0 392.0,269.0 400.0,268.3 423.0,269.0 446.0,272.9 469.0,276.7 485.9,279.0 500.0,278.3 518.4,277.0 530.7,276.7 549.0,277.5 569.0,277.5 569.0,700.0 280.0,700.0 280.0,298.0" fill="#f8b842" stroke="#a8a070" stroke-width="0.8"/>
<polygon points="318.0,300.0 327.6,292.0 336.8,286.0 346.0,288.2 361.3,284.4 372.0,281.3 385.9,282.0 400.0,279.0 423.0,279.5 446.0,281.5 469.0,284.0 486.0,285.5 500.0,284.5 520.0,283.0 550.0,283.0 570.0,283.0 570.0,700.0 278.0,700.0 278.0,300.0" fill="#f8aa3e" stroke="#a8a070" stroke-width="0.8"/>
<polygon points="316.0,302.0 327.6,295.0 346.0,293.6 361.3,290.5 379.8,288.2 400.0,286.0 446.0,287.5 486.0,289.5 520.0,287.0 552.0,286.5 572.0,286.5 572.0,700.0 276.0,700.0 276.0,302.0" fill="#f89a3a" stroke="#a8a070" stroke-width="0.8"/>
<g stroke="#9a9a60" stroke-width="0.8" stroke-opacity="0.8">
<line x1="323.0" y1="0" x2="321.5" y2="652"/>
<line x1="328.6" y1="0" x2="327.1" y2="652"/>
<line x1="334.1" y1="0" x2="332.6" y2="652"/>
<line x1="339.7" y1="0" x2="338.2" y2="652"/>
<line x1="345.2" y1="0" x2="343.7" y2="652"/>
<line x1="350.8" y1="0" x2="349.3" y2="652"/>
<line x1="356.3" y1="0" x2="354.8" y2="652"/>
<line x1="361.9" y1="0" x2="360.4" y2="652"/>
<line x1="367.4" y1="0" x2="365.9" y2="652"/>
<line x1="373.0" y1="0" x2="371.5" y2="652"/>
<line x1="378.5" y1="0" x2="377.0" y2="652"/>
<line x1="384.1" y1="0" x2="382.6" y2="652"/>
<line x1="389.6" y1="0" x2="388.1" y2="652"/>
<line x1="395.2" y1="0" x2="393.7" y2="652"/>
<line x1="400.7" y1="0" x2="399.2" y2="652"/>
<line x1="406.3" y1="0" x2="404.8" y2="652"/>
<line x1="411.8" y1="0" x2="410.3" y2="652"/>
<line x1="417.4" y1="0" x2="415.9" y2="652"/>
<line x1="422.9" y1="0" x2="421.4" y2="652"/>
<line x1="428.5" y1="0" x2="427.0" y2="652"/>
<line x1="434.0" y1="0" x2="432.5" y2="652"/>
<line x1="439.6" y1="0" x2="438.1" y2="652"/>
<line x1="445.1" y1="0" x2="443.6" y2="652"/>
<line x1="450.7" y1="0" x2="449.2" y2="652"/>
<line x1="456.2" y1="0" x2="454.7" y2="652"/>
<line x1="461.8" y1="0" x2="460.3" y2="652"/>
<line x1="467.3" y1="0" x2="465.8" y2="652"/>
<line x1="472.9" y1="0" x2="471.4" y2="652"/>
<line x1="478.4" y1="0" x2="476.9" y2="652"/>
<line x1="484.0" y1="0" x2="482.5" y2="652"/>
<line x1="489.5" y1="0" x2="488.0" y2="652"/>
<line x1="495.1" y1="0" x2="493.6" y2="652"/>
<line x1="500.6" y1="0" x2="499.1" y2="652"/>
<line x1="506.2" y1="0" x2="504.7" y2="652"/>
<line x1="511.7" y1="0" x2="510.2" y2="652"/>
<line x1="517.3" y1="0" x2="515.8" y2="652"/>
<line x1="522.8" y1="0" x2="521.3" y2="652"/>
<line x1="528.4" y1="0" x2="526.9" y2="652"/>
<line x1="533.9" y1="0" x2="532.4" y2="652"/>
<line x1="539.5" y1="0" x2="538.0" y2="652"/>
<line x1="545.0" y1="0" x2="543.5" y2="652"/>
<line x1="550.6" y1="0" x2="549.1" y2="652"/>
<line x1="556.1" y1="0" x2="554.6" y2="652"/>
</g>
<g stroke="#a8a488" stroke-width="0.6" stroke-opacity="0.7">
<line x1="300" y1="289.3" x2="570" y2="272.4"/>
<line x1="300" y1="292.6" x2="570" y2="275.7"/>
<line x1="300" y1="295.9" x2="570" y2="279.0"/>
<line x1="300" y1="299.2" x2="570" y2="282.3"/>
<line x1="300" y1="302.5" x2="570" y2="285.6"/>
<line x1="300" y1="305.8" x2="570" y2="288.9"/>
<line x1="300" y1="309.1" x2="570" y2="292.2"/>
<line x1="300" y1="312.4" x2="570" y2="295.5"/>
<line x1="300" y1="315.7" x2="570" y2="298.8"/>
<line x1="300" y1="319.0" x2="570" y2="302.1"/>
<line x1="300" y1="322.3" x2="570" y2="305.4"/>
<line x1="300" y1="325.6" x2="570" y2="308.7"/>
<line x1="300" y1="328.9" x2="570" y2="312.0"/>
</g>
</g>
<polyline points="320.5,298.0 323.0,290.6 326.0,281.4 329.0,266.0 333.0,243.0 336.8,220.0 344.0,183.0 344.4,183.8 351.0,135.0 360.7,97.5 372.0,82.8 380.3,78.0 390.0,83.5 403.0,95.0 417.7,101.7 427.5,100.7 450.3,108.9 466.6,120.3 483.0,126.8 496.0,133.3 502.5,136.6 522.0,144.0 538.3,148.6 540.4,241.0 545.2,241.5 546.0,270.6 548.3,281.3 551.4,290.5" fill="none" stroke="#a8a878" stroke-width="0.7" stroke-opacity="0.7"/>
 </svg>
</div>

<!-- WINDOW 2 -->
<div class="win" style="left:107.700px;top:346.800px;width:522px;height:310px;">
 <div class="wtitle"><div id="tx23" class="t" style="left:22px;">04_009_Spot-C.wav (2 s 470 ms / 4 s 9 ms)</div>
  <svg style="left:7.5px;top:5.500px" width="13" height="13" viewBox="0 0 13 13"><path d="M0.600 0.500 L12 5.200 L0.600 12 Z" fill="#2f9a52"/><path d="M1.200 3.600 L3.400 8.600 L5.600 4.600 L7.600 8.200 L11 2.600" fill="none" stroke="#fff" stroke-width="1.700"/></svg>
  <svg style="left:415.800px;top:0" width="100" height="24" viewBox="415 0 100 24" fill="none" stroke="#b4b4b4" stroke-width="1"><path d="M421.500 11.500 h8.500"/><rect x="459" y="7" width="8.500" height="8.500"/><path d="M497.500 7 l8.500 8.500 M506 7 l-8.500 8.500"/></svg>
 </div>
 <svg style="left:8.5px;top:32.5px" width="106" height="16" viewBox="0 0 106 16"><defs><linearGradient id="jg4" x1="0" y1="0" x2="1" y2="0"><stop offset="0" stop-color="#1e1e1e"/><stop offset="0.14" stop-color="#2c2d2e"/><stop offset="0.32" stop-color="#3e4042"/><stop offset="0.5" stop-color="#4e5154"/><stop offset="0.68" stop-color="#3e4042"/><stop offset="0.86" stop-color="#2c2d2e"/><stop offset="1" stop-color="#1e1e1e"/></linearGradient></defs><rect x="0" y="0" width="106" height="16" fill="url(#jg4)"/><path d="M0.8 0 V16 M3.2 0 V16 M7.1 0 V16 M12.4 0 V16 M18.9 0 V16 M26.5 0 V16 M34.9 0 V16 M43.8 0 V16 M53.0 0 V16 M62.2 0 V16 M71.1 0 V16 M79.5 0 V16 M87.1 0 V16 M93.6 0 V16 M98.9 0 V16 M102.8 0 V16 M105.2 0 V16" stroke="#000" stroke-opacity="0.45" stroke-width="1" fill="none"/><rect x="0.5" y="0.5" width="105" height="15" fill="none" stroke="#383838"/></svg>
 <div class="rng" style="left:8.500px;top:57.500px;"><div id="tx24" class="t">20 Hz - 20000 Hz</div></div>
 <svg style="left:-107.700px;top:-346.800px" width="798" height="652" viewBox="0 0 798 652">
<defs><linearGradient id="rb2" gradientUnits="userSpaceOnUse" x1="219.0" y1="526.3" x2="227.5" y2="653.0">
<stop offset="0" stop-color="#d850f0"/>
<stop offset="0.04" stop-color="#c048ec"/>
<stop offset="0.09" stop-color="#6a3ce4"/>
<stop offset="0.13" stop-color="#2a24dc"/>
<stop offset="0.19" stop-color="#2430e0"/>
<stop offset="0.25" stop-color="#4090f0"/>
<stop offset="0.31" stop-color="#5ee4f4"/>
<stop offset="0.36" stop-color="#5ef0d8"/>
<stop offset="0.43" stop-color="#5ef098"/>
<stop offset="0.5" stop-color="#5eee58"/>
<stop offset="0.56" stop-color="#88f054"/>
<stop offset="0.62" stop-color="#b8f254"/>
<stop offset="0.68" stop-color="#e4f458"/>
<stop offset="0.73" stop-color="#f6f058"/>
<stop offset="0.79" stop-color="#f8d048"/>
<stop offset="0.84" stop-color="#f8b440"/>
<stop offset="0.9" stop-color="#f88c38"/>
<stop offset="0.95" stop-color="#f65c30"/>
<stop offset="1" stop-color="#f03424"/>
</linearGradient>
<clipPath id="fc2"><polygon points="219.0,526.3 346.0,520.0 346.0,632.0 345.0,628.0 379.0,623.0 410.0,620.0 459.0,618.5 510.0,616.5 556.0,613.5 563.7,630.5 540.7,634.5 510.0,638.5 479.0,641.0 448.3,643.3 430.0,645.6 410.0,644.8 379.0,647.0 346.8,650.2 184.1,655.9"/></clipPath>
<clipPath id="wc2"><polygon points="344.4,520.6 352.6,465.0 360.7,424.4 366.3,413.7 378.6,422.8 396.6,439.0 412.9,453.8 429.0,456.0 450.3,462.0 463.4,467.8 473.0,470.0 486.0,481.5 499.0,489.6 515.5,497.7 532.4,505.0 534.5,588.0 538.4,590.3 541.4,598.0 546.8,599.5 547.6,608.7 550.6,613.3 556.0,619.5 556.0,619.5 510.0,622.5 459.0,624.5 410.0,626.0 379.0,629.0 345.0,634.0 324.0,637.0 324.0,634.0 326.0,622.0 330.0,607.2 333.0,598.0 336.0,582.7 338.4,567.3 340.7,552.0 342.4,546.6 345.9,519.8"/></clipPath>
</defs>
<g stroke="#d4d4d4" stroke-width="1.1" fill="none">
<line x1="157.2" y1="662" x2="206.4" y2="523.2"/>
<line x1="155.8" y1="645.5" x2="167.8" y2="645.5"/>
<line x1="164" y1="622.2" x2="176" y2="622.2"/>
<line x1="171" y1="603.2" x2="183" y2="603.2"/>
<line x1="178.2" y1="584.1" x2="190.2" y2="584.1"/>
<line x1="183.7" y1="568.8" x2="195.7" y2="568.8"/>
<line x1="189.6" y1="553.6" x2="201.6" y2="553.6"/>
<line x1="194.6" y1="540.5" x2="206.6" y2="540.5"/>
<line x1="200.4" y1="526.3" x2="212.4" y2="526.3"/>
<line x1="165" y1="668" x2="577" y2="642.5"/>
<line x1="478.5" y1="645.3" x2="480.1" y2="652.3"/>
<line x1="525.2" y1="642.5" x2="526.8" y2="649.5"/>
<line x1="589.2" y1="638.3" x2="590.8" y2="645.3"/>
</g>
<polygon points="200.9,525.4000000000001 211.9,525.4000000000001 207.6,521.4000000000001" fill="#d4d4d4"/>
<polygon points="590,641.6 575.7,639.4 576.1,645.8" fill="#d4d4d4"/>
<g font-family="Liberation Sans, sans-serif" font-size="7.6" fill="#d0d0d0" text-anchor="middle">
<text x="156.3" y="654.3000000000001" textLength="17.2" lengthAdjust="spacingAndGlyphs">44 Hz</text>
<text x="166.6" y="631.4000000000001" textLength="20.7" lengthAdjust="spacingAndGlyphs">115 Hz</text>
<text x="174.4" y="612.9000000000001" textLength="20.7" lengthAdjust="spacingAndGlyphs">255 Hz</text>
<text x="183" y="593.3000000000001" textLength="20.7" lengthAdjust="spacingAndGlyphs">640 Hz</text>
<text x="190.5" y="577.4000000000001" textLength="24.2" lengthAdjust="spacingAndGlyphs">1440 Hz</text>
<text x="196.6" y="561.1" textLength="24.2" lengthAdjust="spacingAndGlyphs">3620 Hz</text>
<text x="201" y="548.7" textLength="24.2" lengthAdjust="spacingAndGlyphs">8130 Hz</text>
<text x="207.5" y="534.5" textLength="27.6" lengthAdjust="spacingAndGlyphs">20000 Hz</text>
<text x="588.5" y="655.8" textLength="24.2" lengthAdjust="spacingAndGlyphs">1.541 s</text>
</g>
<polygon points="219.0,526.3 346.0,520.0 346.0,632.0 345.0,628.0 379.0,623.0 410.0,620.0 459.0,618.5 510.0,616.5 556.0,613.5 563.7,630.5 540.7,634.5 510.0,638.5 479.0,641.0 448.3,643.3 430.0,645.6 410.0,644.8 379.0,647.0 346.8,650.2 184.1,655.9" fill="url(#rb2)"/>
<g clip-path="url(#fc2)" stroke="#a4a4a4" stroke-opacity="0.8" stroke-width="0.65" fill="none">
<line x1="219.0" y1="526.3" x2="559.6" y2="509.4"/>
<line x1="218.1" y1="529.7" x2="559.7" y2="512.6"/>
<line x1="217.2" y1="533.1" x2="559.8" y2="515.8"/>
<line x1="216.2" y1="536.5" x2="559.9" y2="519.0"/>
<line x1="215.3" y1="539.9" x2="560.0" y2="522.2"/>
<line x1="214.4" y1="543.4" x2="560.1" y2="525.3"/>
<line x1="213.5" y1="546.8" x2="560.2" y2="528.5"/>
<line x1="212.6" y1="550.2" x2="560.3" y2="531.7"/>
<line x1="211.7" y1="553.6" x2="560.5" y2="534.9"/>
<line x1="210.7" y1="557.0" x2="560.6" y2="538.1"/>
<line x1="209.8" y1="560.4" x2="560.7" y2="541.3"/>
<line x1="208.9" y1="563.8" x2="560.8" y2="544.5"/>
<line x1="208.0" y1="567.2" x2="560.9" y2="547.6"/>
<line x1="207.1" y1="570.6" x2="561.0" y2="550.8"/>
<line x1="206.1" y1="574.0" x2="561.1" y2="554.0"/>
<line x1="205.2" y1="577.5" x2="561.2" y2="557.2"/>
<line x1="204.3" y1="580.9" x2="561.3" y2="560.4"/>
<line x1="203.4" y1="584.3" x2="561.4" y2="563.6"/>
<line x1="202.5" y1="587.7" x2="561.5" y2="566.8"/>
<line x1="201.6" y1="591.1" x2="561.6" y2="570.0"/>
<line x1="200.6" y1="594.5" x2="561.8" y2="573.1"/>
<line x1="199.7" y1="597.9" x2="561.9" y2="576.3"/>
<line x1="198.8" y1="601.3" x2="562.0" y2="579.5"/>
<line x1="197.9" y1="604.7" x2="562.1" y2="582.7"/>
<line x1="197.0" y1="608.2" x2="562.2" y2="585.9"/>
<line x1="196.0" y1="611.6" x2="562.3" y2="589.1"/>
<line x1="195.1" y1="615.0" x2="562.4" y2="592.3"/>
<line x1="194.2" y1="618.4" x2="562.5" y2="595.4"/>
<line x1="193.3" y1="621.8" x2="562.6" y2="598.6"/>
<line x1="192.4" y1="625.2" x2="562.7" y2="601.8"/>
<line x1="191.4" y1="628.6" x2="562.8" y2="605.0"/>
<line x1="190.5" y1="632.0" x2="562.9" y2="608.2"/>
<line x1="189.6" y1="635.4" x2="563.1" y2="611.4"/>
<line x1="188.7" y1="638.8" x2="563.2" y2="614.6"/>
<line x1="187.8" y1="642.3" x2="563.3" y2="617.8"/>
<line x1="186.9" y1="645.7" x2="563.4" y2="620.9"/>
<line x1="185.9" y1="649.1" x2="563.5" y2="624.1"/>
<line x1="185.0" y1="652.5" x2="563.6" y2="627.3"/>
<line x1="184.1" y1="655.9" x2="563.7" y2="630.5"/>
<line x1="183.2" y1="659.3" x2="563.8" y2="633.7"/>
<line x1="182.3" y1="662.7" x2="563.9" y2="636.9"/>
<line x1="181.3" y1="666.1" x2="564.0" y2="640.1"/>
<line x1="219.0" y1="526.3" x2="180.6" y2="668.9"/>
<line x1="223.8" y1="526.1" x2="186.1" y2="668.5"/>
<line x1="228.7" y1="525.8" x2="191.6" y2="668.1"/>
<line x1="233.5" y1="525.6" x2="197.1" y2="667.7"/>
<line x1="238.4" y1="525.3" x2="202.5" y2="667.4"/>
<line x1="243.2" y1="525.1" x2="208.0" y2="667.0"/>
<line x1="248.1" y1="524.9" x2="213.5" y2="666.6"/>
<line x1="252.9" y1="524.6" x2="219.0" y2="666.2"/>
<line x1="257.7" y1="524.4" x2="224.5" y2="665.9"/>
<line x1="262.6" y1="524.1" x2="229.9" y2="665.5"/>
<line x1="267.4" y1="523.9" x2="235.4" y2="665.1"/>
<line x1="272.3" y1="523.7" x2="240.9" y2="664.7"/>
<line x1="277.1" y1="523.4" x2="246.4" y2="664.4"/>
<line x1="282.0" y1="523.2" x2="251.9" y2="664.0"/>
<line x1="286.8" y1="522.9" x2="257.3" y2="663.6"/>
<line x1="291.7" y1="522.7" x2="262.8" y2="663.2"/>
<line x1="296.5" y1="522.5" x2="268.3" y2="662.9"/>
<line x1="301.4" y1="522.2" x2="273.8" y2="662.5"/>
<line x1="306.2" y1="522.0" x2="279.3" y2="662.1"/>
<line x1="311.1" y1="521.7" x2="284.7" y2="661.7"/>
<line x1="315.9" y1="521.5" x2="290.2" y2="661.4"/>
<line x1="320.8" y1="521.3" x2="295.7" y2="661.0"/>
<line x1="325.7" y1="521.0" x2="301.2" y2="660.6"/>
<line x1="330.5" y1="520.8" x2="306.7" y2="660.2"/>
<line x1="335.4" y1="520.5" x2="312.1" y2="659.9"/>
<line x1="340.2" y1="520.3" x2="317.6" y2="659.5"/>
<line x1="345.1" y1="520.0" x2="323.1" y2="659.1"/>
<line x1="349.9" y1="519.8" x2="328.6" y2="658.7"/>
<line x1="354.8" y1="519.6" x2="334.1" y2="658.4"/>
<line x1="359.7" y1="519.3" x2="339.5" y2="658.0"/>
<line x1="364.5" y1="519.1" x2="345.0" y2="657.6"/>
<line x1="369.4" y1="518.8" x2="350.5" y2="657.2"/>
<line x1="374.2" y1="518.6" x2="356.0" y2="656.9"/>
<line x1="379.1" y1="518.4" x2="361.4" y2="656.5"/>
<line x1="384.0" y1="518.1" x2="366.9" y2="656.1"/>
<line x1="388.8" y1="517.9" x2="372.4" y2="655.7"/>
<line x1="393.7" y1="517.6" x2="377.9" y2="655.4"/>
<line x1="398.6" y1="517.4" x2="383.4" y2="655.0"/>
<line x1="403.4" y1="517.2" x2="388.8" y2="654.6"/>
<line x1="408.3" y1="516.9" x2="394.3" y2="654.2"/>
<line x1="413.2" y1="516.7" x2="399.8" y2="653.9"/>
<line x1="418.0" y1="516.4" x2="405.3" y2="653.5"/>
<line x1="422.9" y1="516.2" x2="410.8" y2="653.1"/>
<line x1="427.8" y1="515.9" x2="416.2" y2="652.7"/>
<line x1="432.7" y1="515.7" x2="421.7" y2="652.4"/>
<line x1="437.5" y1="515.5" x2="427.2" y2="652.0"/>
<line x1="442.4" y1="515.2" x2="432.7" y2="651.6"/>
<line x1="447.3" y1="515.0" x2="438.1" y2="651.2"/>
<line x1="452.2" y1="514.7" x2="443.6" y2="650.9"/>
<line x1="457.0" y1="514.5" x2="449.1" y2="650.5"/>
<line x1="461.9" y1="514.3" x2="454.6" y2="650.1"/>
<line x1="466.8" y1="514.0" x2="460.1" y2="649.7"/>
<line x1="471.7" y1="513.8" x2="465.5" y2="649.4"/>
<line x1="476.5" y1="513.5" x2="471.0" y2="649.0"/>
<line x1="481.4" y1="513.3" x2="476.5" y2="648.6"/>
<line x1="486.3" y1="513.0" x2="482.0" y2="648.2"/>
<line x1="491.2" y1="512.8" x2="487.4" y2="647.9"/>
<line x1="496.1" y1="512.6" x2="492.9" y2="647.5"/>
<line x1="500.9" y1="512.3" x2="498.4" y2="647.1"/>
<line x1="505.8" y1="512.1" x2="503.9" y2="646.7"/>
<line x1="510.7" y1="511.8" x2="509.3" y2="646.4"/>
<line x1="515.6" y1="511.6" x2="514.8" y2="646.0"/>
<line x1="520.5" y1="511.3" x2="520.3" y2="645.6"/>
<line x1="525.4" y1="511.1" x2="525.8" y2="645.2"/>
<line x1="530.2" y1="510.9" x2="531.3" y2="644.9"/>
<line x1="535.1" y1="510.6" x2="536.7" y2="644.5"/>
<line x1="540.0" y1="510.4" x2="542.2" y2="644.1"/>
<line x1="544.9" y1="510.1" x2="547.7" y2="643.7"/>
<line x1="549.8" y1="509.9" x2="553.2" y2="643.4"/>
<line x1="554.7" y1="509.6" x2="558.6" y2="643.0"/>
<line x1="559.6" y1="509.4" x2="564.1" y2="642.6"/>
</g>
<g clip-path="url(#wc2)">
<polygon points="300.0,400.0 570.0,400.0 590.0,400.0 590.0,700.0 260.0,700.0 260.0,400.0" fill="#b4f254" stroke="#a8a070" stroke-width="0.8"/>
<polygon points="330.0,520.0 347.7,504.0 356.0,497.7 360.7,501.0 378.0,510.0 393.3,525.4 404.7,532.0 417.7,540.8 434.0,537.5 456.8,543.4 473.0,541.8 496.0,548.3 515.5,551.5 540.0,553.8 560.0,553.8 560.0,700.0 290.0,700.0 290.0,520.0" fill="#c4f256" stroke="#a8a070" stroke-width="0.8"/>
<polygon points="322.0,622.0 331.5,608.7 337.6,596.5 340.7,587.3 346.0,567.3 349.9,552.0 352.6,536.9 356.0,515.0 360.7,501.0 368.9,481.5 373.0,477.5 378.6,484.7 385.0,504.0 393.3,527.0 404.7,550.0 410.0,561.2 420.7,567.3 433.0,567.3 448.3,573.5 463.7,579.6 479.0,585.0 495.9,586.5 510.0,588.0 534.5,588.0 548.0,588.0 568.0,588.0 568.0,700.0 282.0,700.0 282.0,622.0" fill="#f0f45c" stroke="#a8a070" stroke-width="0.8"/>
<polygon points="326.0,622.0 337.6,601.0 345.3,598.0 356.0,596.5 362.1,592.6 374.4,591.9 391.3,587.3 402.0,596.5 410.0,598.0 440.0,597.2 471.0,596.5 510.0,596.5 548.0,596.0 568.0,596.0 568.0,700.0 286.0,700.0 286.0,622.0" fill="#f4f868" stroke="#a8a070" stroke-width="0.8"/>
<polygon points="328.0,632.0 334.0,626.0 345.3,624.0 356.0,616.4 368.3,611.0 379.0,608.7 389.8,605.0 402.0,602.6 410.0,603.4 459.0,601.0 510.0,599.5 534.5,599.5 549.0,599.5 569.0,599.5 569.0,700.0 288.0,700.0 288.0,632.0" fill="#f8cc46" stroke="#a8a070" stroke-width="0.8"/>
<polygon points="310.0,630.2 330.0,628.7 345.3,627.2 360.6,624.0 379.0,619.5 395.9,618.0 410.0,616.4 459.0,614.9 510.0,611.8 548.0,612.0 553.0,613.3 573.0,613.3 573.0,700.0 270.0,700.0 270.0,630.2" fill="#f8aa3e" stroke="#a8a070" stroke-width="0.8"/>
<g stroke="#8aa860" stroke-width="0.8" stroke-opacity="0.8">
<line x1="326.5" y1="0" x2="325.0" y2="652"/>
<line x1="332.1" y1="0" x2="330.6" y2="652"/>
<line x1="337.6" y1="0" x2="336.1" y2="652"/>
<line x1="343.2" y1="0" x2="341.7" y2="652"/>
<line x1="348.7" y1="0" x2="347.2" y2="652"/>
<line x1="354.3" y1="0" x2="352.8" y2="652"/>
<line x1="359.8" y1="0" x2="358.3" y2="652"/>
<line x1="365.4" y1="0" x2="363.9" y2="652"/>
<line x1="370.9" y1="0" x2="369.4" y2="652"/>
<line x1="376.5" y1="0" x2="375.0" y2="652"/>
<line x1="382.0" y1="0" x2="380.5" y2="652"/>
<line x1="387.6" y1="0" x2="386.1" y2="652"/>
<line x1="393.1" y1="0" x2="391.6" y2="652"/>
<line x1="398.7" y1="0" x2="397.2" y2="652"/>
<line x1="404.2" y1="0" x2="402.7" y2="652"/>
<line x1="409.8" y1="0" x2="408.3" y2="652"/>
<line x1="415.3" y1="0" x2="413.8" y2="652"/>
<line x1="420.9" y1="0" x2="419.4" y2="652"/>
<line x1="426.4" y1="0" x2="424.9" y2="652"/>
<line x1="432.0" y1="0" x2="430.5" y2="652"/>
<line x1="437.5" y1="0" x2="436.0" y2="652"/>
<line x1="443.1" y1="0" x2="441.6" y2="652"/>
<line x1="448.6" y1="0" x2="447.1" y2="652"/>
<line x1="454.2" y1="0" x2="452.7" y2="652"/>
<line x1="459.7" y1="0" x2="458.2" y2="652"/>
<line x1="465.3" y1="0" x2="463.8" y2="652"/>
<line x1="470.8" y1="0" x2="469.3" y2="652"/>
<line x1="476.4" y1="0" x2="474.9" y2="652"/>
<line x1="481.9" y1="0" x2="480.4" y2="652"/>
<line x1="487.5" y1="0" x2="486.0" y2="652"/>
<line x1="493.0" y1="0" x2="491.5" y2="652"/>
<line x1="498.6" y1="0" x2="497.1" y2="652"/>
<line x1="504.1" y1="0" x2="502.6" y2="652"/>
<line x1="509.7" y1="0" x2="508.2" y2="652"/>
<line x1="515.2" y1="0" x2="513.7" y2="652"/>
<line x1="520.8" y1="0" x2="519.3" y2="652"/>
<line x1="526.3" y1="0" x2="524.8" y2="652"/>
<line x1="531.9" y1="0" x2="530.4" y2="652"/>
<line x1="537.4" y1="0" x2="535.9" y2="652"/>
<line x1="543.0" y1="0" x2="541.5" y2="652"/>
<line x1="548.5" y1="0" x2="547.0" y2="652"/>
<line x1="554.1" y1="0" x2="552.6" y2="652"/>
<line x1="559.6" y1="0" x2="558.1" y2="652"/>
</g>
<g stroke="#a8a488" stroke-width="0.6" stroke-opacity="0.7">
<line x1="300" y1="600.7" x2="570" y2="582.6"/>
<line x1="300" y1="604.0" x2="570" y2="585.9"/>
<line x1="300" y1="607.3" x2="570" y2="589.2"/>
<line x1="300" y1="610.6" x2="570" y2="592.5"/>
<line x1="300" y1="613.9" x2="570" y2="595.8"/>
<line x1="300" y1="617.2" x2="570" y2="599.1"/>
<line x1="300" y1="620.5" x2="570" y2="602.4"/>
<line x1="300" y1="623.8" x2="570" y2="605.7"/>
<line x1="300" y1="627.1" x2="570" y2="609.0"/>
<line x1="300" y1="630.4" x2="570" y2="612.3"/>
<line x1="300" y1="633.7" x2="570" y2="615.6"/>
<line x1="300" y1="637.0" x2="570" y2="618.9"/>
<line x1="300" y1="640.3" x2="570" y2="622.2"/>
</g>
</g>
<polyline points="324.0,634.0 326.0,622.0 330.0,607.2 333.0,598.0 336.0,582.7 338.4,567.3 340.7,552.0 342.4,546.6 345.9,519.8 344.4,520.6 352.6,465.0 360.7,424.4 366.3,413.7 378.6,422.8 396.6,439.0 412.9,453.8 429.0,456.0 450.3,462.0 463.4,467.8 473.0,470.0 486.0,481.5 499.0,489.6 515.5,497.7 532.4,505.0 534.5,588.0 538.4,590.3 541.4,598.0 546.8,599.5 547.6,608.7 550.6,613.3 556.0,619.5" fill="none" stroke="#a8a878" stroke-width="0.7" stroke-opacity="0.7"/>
 </svg>
</div>

</div>
</body></html>
